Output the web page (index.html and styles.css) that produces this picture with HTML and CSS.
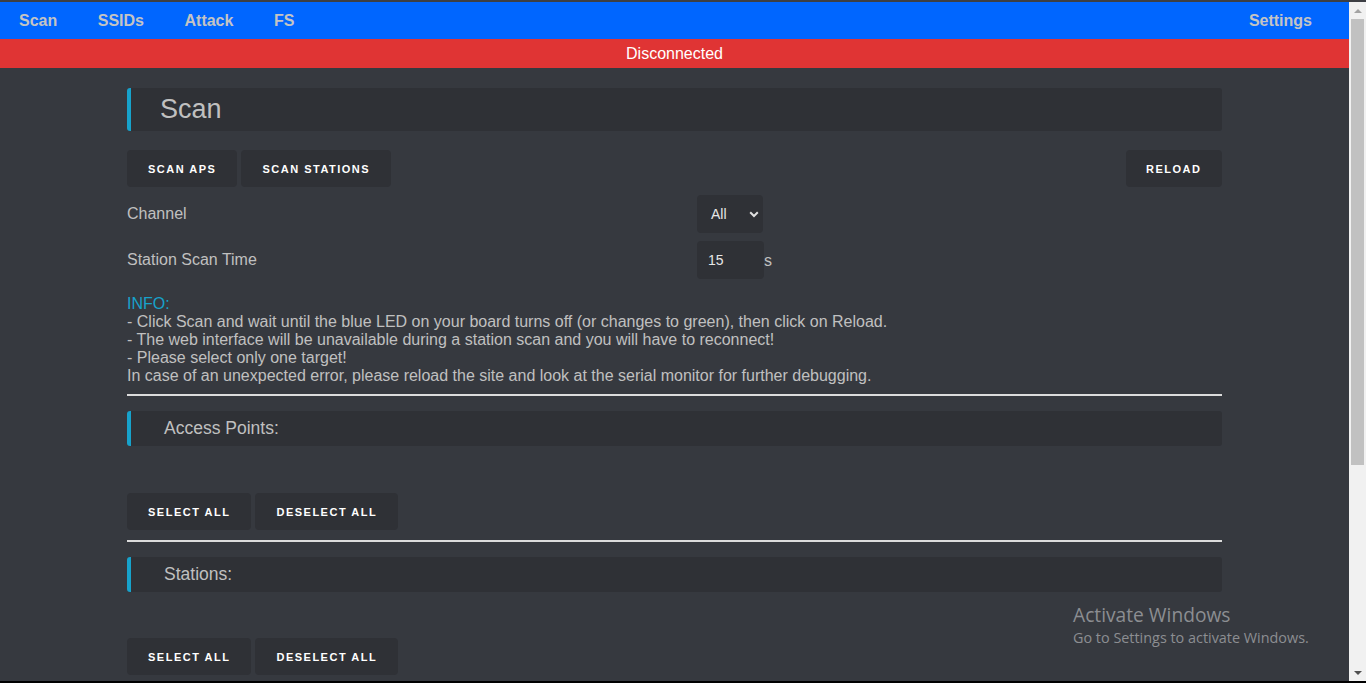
FILE: index.html
```html
<!DOCTYPE html>
<html lang="en">
<head>
<meta charset="utf-8">
<title>Scan</title>
<link rel="stylesheet" href="styles.css">
</head>
<body>
<div class="frame">
  <div class="frame-top"></div>
  <div class="window">
    <div class="page">
      <nav class="nav">
        <a class="nav-link">Scan</a>
        <a class="nav-link">SSIDs</a>
        <a class="nav-link">Attack</a>
        <a class="nav-link">FS</a>
        <a class="nav-link nav-right">Settings</a>
      </nav>
      <div class="status">Disconnected</div>

      <main class="container">
        <h1 class="title">Scan</h1>

        <div class="toolbar">
          <button class="btn">SCAN APS</button>
          <button class="btn">SCAN STATIONS</button>
          <button class="btn btn-right">RELOAD</button>
        </div>

        <div class="field">
          <label class="field-label">Channel</label>
          <div class="field-control">
            <div class="select">
              <span>All</span>
              <svg class="chev" width="10" height="7" viewBox="0 0 10 7"><path d="M1.2 1.3 L5 5 L8.8 1.3" fill="none" stroke="#e0e0e0" stroke-width="2"/></svg>
            </div>
          </div>
        </div>

        <div class="field">
          <label class="field-label">Station Scan Time</label>
          <div class="field-control">
            <div class="input">15</div>
            <span class="unit">s</span>
          </div>
        </div>

        <div class="info">
          <span class="info-title">INFO:</span><br>
          - Click Scan and wait until the blue LED on your board turns off (or changes to green), then click on Reload.<br>
          - The web interface will be unavailable during a station scan and you will have to reconnect!<br>
          - Please select only one target!<br>
          In case of an unexpected error, please reload the site and look at the serial monitor for further debugging.
        </div>

        <div class="rule"></div>

        <h2 class="subtitle">Access Points:</h2>
        <div class="table-space"></div>
        <div class="toolbar toolbar-tight">
          <button class="btn">SELECT ALL</button>
          <button class="btn">DESELECT ALL</button>
        </div>

        <div class="rule rule-2"></div>

        <h2 class="subtitle">Stations:</h2>
        <div class="table-space table-space-2"></div>
        <div class="toolbar toolbar-tight">
          <button class="btn">SELECT ALL</button>
          <button class="btn">DESELECT ALL</button>
        </div>
      </main>

      <div class="watermark">
        <div class="wm-title">Activate Windows</div>
        <div class="wm-sub">Go to Settings to activate Windows.</div>
      </div>
    </div>

    <div class="scrollbar">
      <div class="sb-btn"><span class="arrow-up"></span></div>
      <div class="sb-track"><div class="sb-thumb"></div></div>
      <div class="sb-btn"><span class="arrow-down"></span></div>
    </div>
  </div>
  <div class="frame-bottom"></div>
</div>
</body>
</html>
```

FILE: styles.css
```css
* { box-sizing: border-box; }

html, body {
  margin: 0;
  padding: 0;
  width: 1366px;
  height: 683px;
  overflow: hidden;
  background: #000;
  font-family: "Liberation Sans", Arial, sans-serif;
}

.frame {
  display: flex;
  flex-direction: column;
  height: 683px;
}

.frame-top {
  height: 2px;
  background: #3d3f44;
  flex: none;
}

.frame-bottom {
  height: 2px;
  background: #000;
  flex: none;
}

.window {
  flex: 1;
  display: flex;
  min-height: 0;
}

.page {
  flex: 1;
  background: #36393f;
  overflow: hidden;
  position: relative;
}

/* nav */
.nav {
  height: 37px;
  background: #0066ff;
  display: flex;
  align-items: center;
  gap: 40.5px;
  padding: 0 37px 0 19px;
}

.nav-link {
  font-weight: bold;
  font-size: 16px;
  color: #c4c4c4;
}

.nav-right { margin-left: auto; }

.status {
  height: 29px;
  line-height: 29px;
  background: #e03434;
  color: #fff;
  font-size: 16px;
  text-align: center;
}

/* content */
.container {
  width: 1095px;
  margin: 20px auto 0;
}

.title {
  margin: 0;
  height: 43px;
  display: flex;
  align-items: center;
  padding-left: 29px;
  background: #2f3136;
  border-left: 4px solid #17a2cb;
  border-radius: 3px;
  font-size: 27px;
  font-weight: normal;
  color: #c0c0c0;
}

.subtitle {
  margin: 15px 0 0;
  height: 35px;
  display: flex;
  align-items: center;
  padding-left: 33px;
  background: #2f3136;
  border-left: 4px solid #17a2cb;
  border-radius: 3px;
  font-size: 17.5px;
  font-weight: normal;
  color: #c0c0c0;
}

.toolbar {
  display: flex;
  gap: 4px;
  margin-top: 19px;
}

.toolbar-tight { margin-top: 0; }

.btn {
  height: 37px;
  padding: 0 21px;
  border: none;
  border-radius: 4px;
  background: #2f3136;
  color: #fff;
  font-family: "Liberation Sans", Arial, sans-serif;
  font-weight: bold;
  font-size: 11px;
  letter-spacing: 1.5px;
}

.btn-right { margin-left: auto; padding: 0 20.5px; }

.field {
  display: grid;
  grid-template-columns: 570px auto;
  align-items: center;
  margin-top: 8px;
}

.field-label {
  font-size: 16px;
  color: #c0c0c0;
}

.field-control {
  display: flex;
  align-items: center;
}

.select {
  width: 66px;
  height: 38px;
  background: #2f3136;
  border-radius: 4px;
  display: flex;
  align-items: center;
  justify-content: space-between;
  padding: 0 4px 0 14px;
  color: #e6e6e6;
  font-size: 14px;
}

.chev { margin-top: 1px; }

.input {
  width: 67px;
  height: 38px;
  background: #2f3136;
  border-radius: 4px;
  display: flex;
  align-items: center;
  padding-left: 11px;
  color: #e6e6e6;
  font-size: 14px;
}

.unit {
  font-size: 16px;
  color: #c0c0c0;
  margin-top: 2px;
}

.info {
  margin-top: 16px;
  font-size: 16px;
  line-height: 18px;
  color: #c0c0c0;
}

.info-title { color: #17a2cb; }

.rule {
  height: 2px;
  background: #dcdcdc;
  margin-top: 9px;
}

.rule-2 { margin-top: 10px; }

.table-space { height: 47px; }
.table-space-2 { height: 46px; }

/* watermark */
.watermark {
  position: absolute;
  left: 1073px;
  top: 600px;
  font-family: "Open Sans", "Noto Sans", sans-serif;
  color: #8c8e92;
}

.wm-title {
  font-size: 19.2px;
  line-height: 26px;
}

.wm-sub {
  font-size: 14.4px;
  line-height: 19px;
}

/* scrollbar */
.scrollbar {
  width: 17px;
  flex: none;
  background: #f1f1f1;
  display: flex;
  flex-direction: column;
}

.sb-btn {
  height: 17px;
  flex: none;
  display: flex;
  align-items: center;
  justify-content: center;
}

.sb-track {
  flex: 1;
  padding: 0 2px;
}

.sb-thumb {
  height: 446px;
  background: #c1c1c1;
}

.arrow-up {
  width: 0;
  height: 0;
  border-left: 4px solid transparent;
  border-right: 4px solid transparent;
  border-bottom: 4px solid #a3a3a3;
}

.arrow-down {
  width: 0;
  height: 0;
  border-left: 4px solid transparent;
  border-right: 4px solid transparent;
  border-top: 4px solid #505050;
}
```
